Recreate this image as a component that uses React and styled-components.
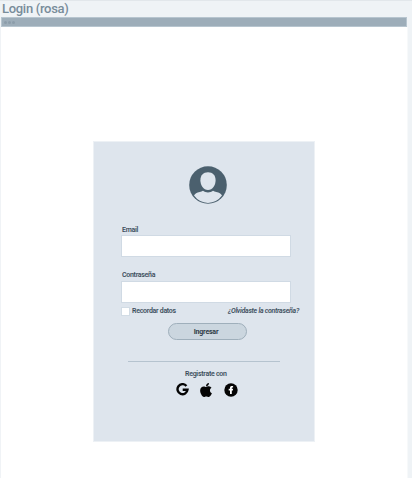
import React from 'react';
import styled, { createGlobalStyle } from 'styled-components';
import { FaApple } from 'react-icons/fa';

const GlobalStyle = createGlobalStyle`
  * { box-sizing: border-box; }
  body { margin: 0; background: #eff3f6; overflow: hidden; }
`;

const Page = styled.main`
  height: 478px;
  padding: 0 5px 0 1px;
  border-top: 1px solid #e2e7eb;
  display: flex;
  flex-direction: column;
  font-family: Roboto, 'Liberation Sans', sans-serif;
  color: #3d4f5d;
`;

const Title = styled.h1`
  margin: 0;
  height: 16px;
  padding-left: 1px;
  font-size: 13px;
  line-height: 15px;
  font-weight: 500;
  letter-spacing: -0.3px;
  color: #788c9a;
`;

const WindowBar = styled.div`
  flex: none;
  height: 10px;
  display: flex;
  align-items: center;
  gap: 1px;
  padding-left: 2px;
  background: #9dadb9;
  border: 1px solid #b7c5cf;
`;

const Dot = styled.i`
  width: 3px;
  height: 3px;
  border-radius: 50%;
  background: #8c9daa;
`;

const Canvas = styled.section`
  flex: 1;
  display: flex;
  padding: 114px 0 0 92px;
  background: #fff;
  border-left: 1px solid #f0f3f6;
  margin-left: -1px;
  border-right: 1px solid #f7f9fa;
  margin-right: -1px;
`;

const Card = styled.form`
  width: 222px;
  height: 301px;
  padding: 24px 0 0 27px;
  display: flex;
  flex-direction: column;
  background: #dee5ed;
  border: 1px solid #edf1f5;
`;

const Avatar = styled.svg`
  width: 38px;
  height: 38px;
  margin-left: 68px;
  flex: none;
`;

const Text = styled.span`
  font-size: 7px;
  line-height: 10px;
  height: 10px;
  font-weight: ${(p) => p.$weight || 600};
  font-style: ${(p) => (p.$italic ? 'italic' : 'normal')};
  letter-spacing: ${(p) => p.$spacing || '-0.28px'};
  white-space: nowrap;
`;

const Field = styled.label`
  display: flex;
  flex-direction: column;
  padding-top: ${(p) => p.$top};
  gap: ${(p) => p.$gap};
  ${Text} { padding-left: 1px; }
`;

const Input = styled.input`
  width: 170px;
  height: 22px;
  padding: 0 5px;
  background: #fff;
  border: 1px solid #d0dae4;
  border-radius: 0;
  outline: none;
`;

const Options = styled.div`
  display: flex;
  width: 178px;
  margin-top: 3px;
  justify-content: space-between;
`;

const Remember = styled.label`
  display: flex;
  gap: 2px;
`;

const Checkbox = styled.input`
  appearance: none;
  width: 9px;
  height: 9px;
  margin: 1px 0 0;
  background: #fff;
  border: 1px solid #d2dce5;
`;

const Submit = styled.button`
  width: 79px;
  height: 17px;
  margin: 7px 0 0 47px;
  padding: 0 3px 0 0;
  display: flex;
  align-items: center;
  justify-content: center;
  flex: none;
  background: #cbd6df;
  border: 1px solid #9fafbb;
  border-radius: 9px;
  color: #2e3c47;
  font-family: inherit;
`;

const Divider = styled.hr`
  width: 152px;
  height: 1px;
  margin: 21px 0 7px 7px;
  border: 0;
  background: #b5c3cf;
`;

const Register = styled.div`
  display: flex;
  flex-direction: column;
  gap: 3px;
  ${Text} { margin-left: 64px; }
`;

const Socials = styled.div`
  display: flex;
  align-items: flex-start;
  height: 16px;
  margin-left: 55px;
  gap: 10px;
  color: #050505;
`;

const GoogleIcon = styled.svg`
  width: 13px;
  height: 13px;
  margin-top: 1px;
`;

const AppleIcon = styled(FaApple)`
  width: 14px;
  height: 16px;
`;

const FacebookIcon = styled.svg`
  width: 14px;
  height: 14px;
  margin: 1px 0 0 1px;
`;

export default function App() {
  return (
    <>
      <GlobalStyle />
      <Page>
        <Title>Login (rosa)</Title>
        <WindowBar><Dot /><Dot /><Dot /></WindowBar>
        <Canvas>
          <Card>
            <Avatar viewBox="0 0 38 38">
              <circle cx="19" cy="19" r="18.8" fill="#4b606e" />
              <path fill="#dee5ed" d="M19 6.3c-4.800 0-7.600 3.200-7.600 8 0 5 3 9.800 7.600 9.800s7.600-4.800 7.600-9.800c0-4.800-2.800-8-7.600-8Z" />
              <path fill="#dee5ed" d="M14 24.800c2.800 2.200 7.200 2.200 10 0 1 .5 2 .8 3.300 1.100 3 .6 4.600 1.600 5.700 3.700A18 18 0 0 1 19 37a18 18 0 0 1-14-7.400c1.100-2.100 2.700-3.100 5.700-3.700 1.300-.3 2.300-.6 3.300-1.100Z" />
            </Avatar>
            <Field $top="21px" $gap="0"><Text>Email</Text><Input /></Field>
            <Field $top="13px" $gap="1px"><Text>Contraseña</Text><Input type="password" /></Field>
            <Options>
              <Remember><Checkbox type="checkbox" /><Text>Recordar datos</Text></Remember>
              <Text $italic>¿Olvidaste la contraseña?</Text>
            </Options>
            <Submit type="button"><Text $weight={700} $spacing="-0.2px">Ingresar</Text></Submit>
            <Divider />
            <Register>
              <Text>Registrate con</Text>
              <Socials>
                <GoogleIcon viewBox="0 0 13 13">
                  <path fill="none" stroke="currentColor" strokeWidth="2.400" d="M10.400 3A5 5 0 1 0 11.500 6.700H6.700" />
                </GoogleIcon>
                <AppleIcon />
                <FacebookIcon viewBox="0 0 14 14">
                  <circle cx="7" cy="7" r="6.700" fill="currentColor" />
                  <path fill="#fff" d="M6 11V7.500H4.700V5.800H6V4.800C6 3.500 6.700 2.900 8 2.900h1.100v1.600h-.7c-.5 0-.6.2-.6.7v.6h1.300L8.900 7.500H7.800V11Z" />
                </FacebookIcon>
              </Socials>
            </Register>
          </Card>
        </Canvas>
      </Page>
    </>
  );
}
